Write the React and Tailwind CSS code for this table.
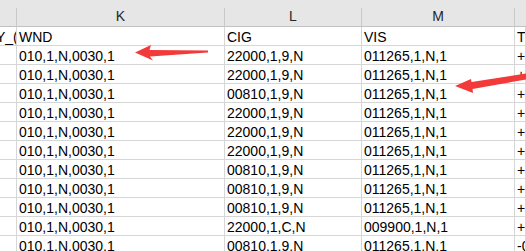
import React from "react";

const rows = [
  ["Y_(", "WND", "CIG", "VIS", "T"],
  ["", "010,1,N,0030,1", "22000,1,9,N", "011265,1,N,1", "+"],
  ["", "010,1,N,0030,1", "22000,1,9,N", "011265,1,N,1", "+"],
  ["", "010,1,N,0030,1", "00810,1,9,N", "011265,1,N,1", "+"],
  ["", "010,1,N,0030,1", "22000,1,9,N", "011265,1,N,1", "+"],
  ["", "010,1,N,0030,1", "22000,1,9,N", "011265,1,N,1", "+"],
  ["", "010,1,N,0030,1", "22000,1,9,N", "011265,1,N,1", "+"],
  ["", "010,1,N,0030,1", "00810,1,9,N", "011265,1,N,1", "+"],
  ["", "010,1,N,0030,1", "00810,1,9,N", "011265,1,N,1", "+"],
  ["", "010,1,N,0030,1", "00810,1,9,N", "011265,1,N,1", "+"],
  ["", "010,1,N,0030,1", "22000,1,C,N", "009900,1,N,1", "+"],
  ["", "010,1,N,0030,1", "00810,1,9,N", "011265,1,N,1", "-0"],
];

const headers = ["", "K", "L", "M", ""];

function HeaderCell({ label, last }) {
  return (
    <div className="flex h-[27px] border-b border-[#c2c2c2] bg-[#e6e6e6]">
      <div className="flex-1 flex items-center justify-center pt-[6px] text-[14px] text-[#262626]">
        {label}
      </div>
      {!last && <div className="self-end h-[18px] w-px bg-[#c9c9c9]" />}
    </div>
  );
}

function Cell({ text, first }) {
  return (
    <div className="flex items-end h-[19px] overflow-hidden whitespace-nowrap border-r border-b border-[#d6d6d6] bg-white">
      <span className={`leading-[16px] text-[14px] text-black ${first ? "ml-[-4px]" : "pl-[2px]"}`}>
        {text}
      </span>
    </div>
  );
}

export default function App() {
  return (
    <div
      className="relative w-[526px] h-[251px] overflow-hidden bg-white"
      style={{ fontFamily: '"Liberation Sans", Arial, sans-serif' }}
    >
      <div className="grid grid-cols-[17px_208px_137px_153px_1fr]">
        {headers.map((h, i) => (
          <HeaderCell key={i} label={h} last={i === headers.length - 1} />
        ))}
        {rows.map((r, ri) =>
          r.map((c, ci) => <Cell key={`${ri}-${ci}`} text={c} first={ci === 0} />)
        )}
      </div>

      {/* red annotation arrows */}
      <svg className="absolute left-0 top-0" width="526" height="251" viewBox="0 0 526 251">
        <polygon
          points="135,52.5 151,45 149.5,50 208,50.5 208,52.5 150,56.5 153,60.5"
          fill="#f23a3a"
        />
        <polygon
          points="455,86 471,79 471.5,82 526,73.5 526,79.5 472.5,89 473,93"
          fill="#f23a3a"
        />
      </svg>
    </div>
  );
}
